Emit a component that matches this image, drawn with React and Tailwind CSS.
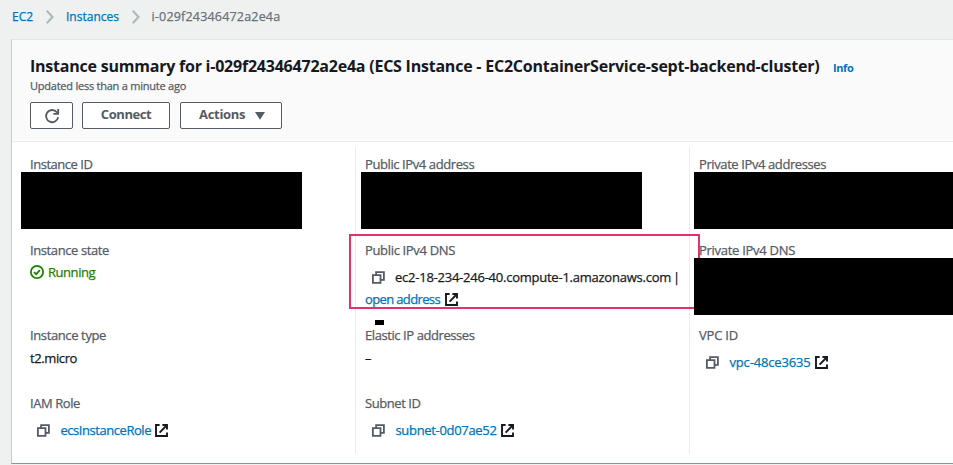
const Chevron = () => (
  <svg width="8" height="14" viewBox="0 0 8 14" className="shrink-0" fill="none" stroke="#aab7b8" strokeWidth="2">
    <path d="M0.8 0.8 6.5 7 0.8 13.2" />
  </svg>
);

const Refresh = () => (
  <svg width="16" height="16" viewBox="0 0 16 16" fill="none" stroke="#545b64" strokeWidth="1.8">
    <path d="M14.2 9.2A6.1 6.1 0 1 1 12.9 4.2L14 5.4" />
    <path d="M14.2 1v4.9H9.4" />
  </svg>
);

const Copy = () => (
  <svg width="13" height="13" viewBox="0 0 13 13" className="shrink-0" fill="none" stroke="#545b64" strokeWidth="1.8">
    <path d="M0.9 4.2h7.6v7.6H0.9z" />
    <path d="M4.1 4V1.1h7.8v7.8H8.8" />
  </svg>
);

const External = () => (
  <svg width="13" height="13" viewBox="0 0 13 13" className="shrink-0" fill="none" stroke="#16191f" strokeWidth="1.9">
    <path d="M4.6 1H1v11h11V8.6" />
    <path d="M7.4 1H12v4.6M12 1 4.6 8.6" />
  </svg>
);

const Check = () => (
  <svg width="14" height="14" viewBox="0 0 14 14" className="shrink-0" fill="none" stroke="#1d8102" strokeWidth="1.8">
    <circle cx="7" cy="7" r="6.1" />
    <path d="M3.9 7.1 6.2 9.2 9.9 5.1" />
  </svg>
);

const Label = ({ className, children }) => <div className={"text-[#545b64] " + className}>{children}</div>;

const Redacted = ({ className }) => <div className={"relative z-10 bg-black " + className} />;

const ResourceLink = ({ className, children }) => (
  <div className="mt-[5px] ml-[7px] flex h-[22px] items-center">
    <span className="mt-px"><Copy /></span>
    <a className={"ml-[10.5px] text-[#0073bb] " + className}>{children}</a>
    <span className="mt-px ml-1"><External /></span>
  </div>
);

export default function App() {
  return (
    <div className="flex h-[465px] w-[953px] flex-col overflow-hidden bg-[#eff1f1] font-['Open_Sans',sans-serif] text-[13px] leading-[22px] whitespace-nowrap text-[#16191f] [-webkit-text-stroke:0.25px]">
      <nav className="flex h-[39px] shrink-0 items-start pt-[6px] pl-3 text-[12px]">
        <a className="w-[34px] text-[#0073bb]">EC2</a>
        <span className="mt-1 w-5"><Chevron /></span>
        <a className="w-[65.5px] text-[#0073bb]">Instances</a>
        <span className="mt-1 w-[20px]"><Chevron /></span>
        <span className="text-[12.5px] tracking-[0.19px] text-[#687078]">i-029f24346472a2e4a</span>
      </nav>

      <main className="relative ml-[11px] flex h-[425px] shrink-0 flex-col border-t border-b border-l border-t-[#e2e5e5] border-b-[#879596] border-l-[#c3cbcb] bg-white">
        <header className="h-[102px] shrink-0 border-b border-[#eaeded] bg-[#fafafa] pl-[18px]">
          <div className="flex items-baseline pt-[15px] [-webkit-text-stroke:0px]">
            <h1 className="text-[16px] leading-[22px] font-bold tracking-[-0.225px]">
              Instance summary for i-029f24346472a2e4a (ECS Instance - EC2ContainerService-sept-backend-cluster)
            </h1>
            <a className="ml-[13.5px] text-[11px] leading-[20px] font-bold tracking-[-0.36px] text-[#0073bb]">Info</a>
          </div>
          <p className="-mt-px h-[17px] text-[11px] leading-[17px] tracking-[-0.234px] text-[#545b64]">Updated less than a minute ago</p>
          <div className="mt-[8px] flex font-bold text-[#545b64] [-webkit-text-stroke:0px]">
            <button className="flex h-[27px] w-[43px] items-center justify-center rounded-[2px] border border-[#545b64] bg-white"><Refresh /></button>
            <button className="ml-[9px] flex h-[27px] w-[88px] items-center justify-center rounded-[2px] border border-[#545b64] bg-white pb-[3px] tracking-[-0.45px]">Connect</button>
            <button className="ml-[10px] flex h-[27px] w-[102px] items-center rounded-[2px] border border-[#545b64] bg-white pb-[3px] pl-[18px] tracking-[-0.3px]">
              Actions
              <svg width="10" height="8" viewBox="0 0 10 8" className="mt-[3px] ml-[10px]" fill="#545b64"><path d="M0 0h10L5 7.8z" /></svg>
            </button>
          </div>
        </header>

        <div className="flex pt-[5px]">
          <section className="h-[307px] w-[343px] pt-[6px] pl-[18px]">
            <div className="h-[86px]">
              <Label className="tracking-[-0.463px]">Instance ID</Label>
              <Redacted className="-mt-[3px] -ml-[9px] h-[57px] w-[281px]" />
            </div>
            <div className="h-[85px]">
              <Label className="tracking-[-0.394px]">Instance state</Label>
              <div className="flex items-center text-[#1d8102]">
                <Check />
                <span className="ml-1 tracking-[-0.45px]">Running</span>
              </div>
            </div>
            <div className="h-[68px]">
              <Label className="tracking-[-0.379px]">Instance type</Label>
              <div className="mt-px tracking-[-0.395px]">t2.micro</div>
            </div>
            <div>
              <Label className="tracking-[-0.418px]">IAM Role</Label>
              <ResourceLink className="tracking-[-0.454px]">ecsInstanceRole</ResourceLink>
            </div>
          </section>

          <section className="h-[307px] w-[334px] border-l border-[#eaeded] pt-[6px] pl-[9px]">
            <div className="h-[86px]">
              <Label className="tracking-[-0.4px]">Public IPv4 address</Label>
              <Redacted className="-mt-[3px] -ml-[4px] h-[57px] w-[281px]" />
            </div>
            <div className="h-[85px]">
              <Label className="tracking-[-0.335px]">Public IPv4 DNS</Label>
              <div className="mt-[5px] ml-[7px] flex h-[22px] items-center">
                <Copy />
                <span className="ml-[10px] tracking-[-0.238px]">ec2-18-234-246-40.compute-1.amazonaws.com</span>
                <span className="ml-[2px]">|</span>
              </div>
              <div className="flex items-center">
                <a className="tracking-[-0.63px] text-[#0073bb]">open address</a>
                <span className="mt-px ml-[5px]"><External /></span>
              </div>
            </div>
            <div className="h-[68px]">
              <Label className="tracking-[-0.42px]">Elastic IP addresses</Label>
              <div className="mt-px">–</div>
            </div>
            <div>
              <Label className="tracking-[-0.433px]">Subnet ID</Label>
              <ResourceLink className="tracking-[-0.324px]">subnet-0d07ae52</ResourceLink>
            </div>
          </section>

          <section className="h-[307px] w-[264px] border-l border-[#eaeded] pt-[6px] pl-[9px]">
            <div className="h-[86px]">
              <Label className="tracking-[-0.4px]">Private IPv4 addresses</Label>
              <Redacted className="-mt-[3px] -ml-[5px] h-[57px] w-[260px]" />
            </div>
            <div className="h-[85px]">
              <Label className="tracking-[-0.284px]">Private IPv4 DNS</Label>
              <Redacted className="-mt-[3px] -ml-[5px] h-[57px] w-[260px]" />
            </div>
            <div>
              <Label className="tracking-[-0.2px]">VPC ID</Label>
              <ResourceLink className="tracking-[-0.165px]">vpc-48ce3635</ResourceLink>
            </div>
          </section>
        </div>

        {/* Annotation marks over the public DNS entry */}
        <div className="absolute top-[194px] left-[337px] h-[75px] w-[351px] border-2 border-[#e1326f]" />
        <div className="absolute top-[280px] left-[363px] h-[5px] w-[9px] bg-black" />
      </main>
    </div>
  );
}
